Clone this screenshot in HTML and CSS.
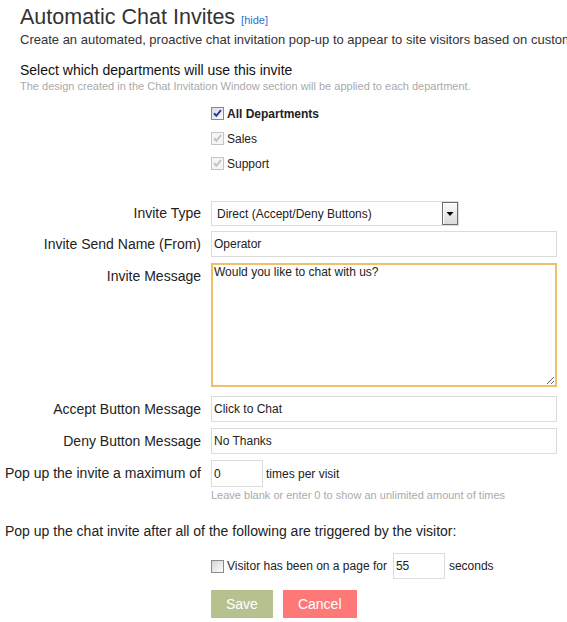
FILE: index.html
```html
<!DOCTYPE html>
<html lang="en">
<head>
<meta charset="utf-8">
<title>Automatic Chat Invites</title>
<link rel="stylesheet" href="styles.css">
</head>
<body>
<div class="head">
  <h1 class="title">Automatic Chat Invites <a class="hide" href="#">[hide]</a></h1>
  <p class="desc">Create an automated, proactive chat invitation pop-up to appear to site visitors based on custom rules.</p>
  <h2 class="section-title">Select which departments will use this invite</h2>
  <p class="note">The design created in the Chat Invitation Window section will be applied to each department.</p>
</div>

<div class="row depts">
  <span></span>
  <ul class="checks">
    <li class="check">
      <svg class="cb" viewBox="0 0 13 13"><defs><linearGradient id="g1" x1="0" y1="0" x2="1" y2="1"><stop offset="0" stop-color="#d9d9d9"/><stop offset="1" stop-color="#ffffff"/></linearGradient></defs><rect x="0.5" y="0.5" width="12" height="12" fill="url(#g1)" stroke="#8a8a8a"/><path d="M3 6.3 L5.3 8.8 L10 3.2" fill="none" stroke="#26409a" stroke-width="2"/></svg>
      <b>All Departments</b>
    </li>
    <li class="check">
      <svg class="cb" viewBox="0 0 13 13"><rect x="0.5" y="0.5" width="12" height="12" fill="#f5f5f5" stroke="#c4c4c4"/><path d="M3 6.3 L5.3 8.8 L10 3.2" fill="none" stroke="#c3c3c3" stroke-width="2"/></svg>
      <span>Sales</span>
    </li>
    <li class="check">
      <svg class="cb" viewBox="0 0 13 13"><rect x="0.5" y="0.5" width="12" height="12" fill="#f5f5f5" stroke="#c4c4c4"/><path d="M3 6.3 L5.3 8.8 L10 3.2" fill="none" stroke="#c3c3c3" stroke-width="2"/></svg>
      <span>Support</span>
    </li>
  </ul>
</div>

<form class="form">
  <div class="row r-type">
    <label class="lbl lbl-type">Invite Type</label>
    <div class="select-wrap">
      <select class="select"><option>Direct (Accept/Deny Buttons)</option></select>
      <span class="arrow"><svg width="14" height="21" viewBox="0 0 14 21"><path d="M3.5 9 H10.5 L7 13 Z" fill="#000"/></svg></span>
    </div>
  </div>
  <div class="row r-from">
    <label class="lbl">Invite Send Name (From)</label>
    <input class="input" type="text" value="Operator">
  </div>
  <div class="row r-msg">
    <label class="lbl">Invite Message</label>
    <textarea class="textarea">Would you like to chat with us?</textarea>
  </div>
  <div class="row r-accept">
    <label class="lbl">Accept Button Message</label>
    <input class="input" type="text" value="Click to Chat">
  </div>
  <div class="row r-deny">
    <label class="lbl">Deny Button Message</label>
    <input class="input" type="text" value="No Thanks">
  </div>
  <div class="row r-max">
    <label class="lbl lbl-max">Pop up the invite a maximum of</label>
    <div>
      <div class="inline">
        <input class="input small" type="text" value="0">
        <span class="after">times per visit</span>
      </div>
      <p class="hint">Leave blank or enter 0 to show an unlimited amount of times</p>
    </div>
  </div>

  <p class="trigger">Pop up the chat invite after all of the following are triggered by the visitor:</p>

  <div class="row r-visitor">
    <span></span>
    <div class="inline">
      <svg class="cb" viewBox="0 0 13 13"><defs><linearGradient id="g2" x1="0" y1="0" x2="1" y2="1"><stop offset="0" stop-color="#d4d4d4"/><stop offset="1" stop-color="#ffffff"/></linearGradient></defs><rect x="0.5" y="0.5" width="12" height="12" fill="url(#g2)" stroke="#8a8a8a"/></svg>
      <span class="vtext">Visitor has been on a page for</span>
      <input class="input small secs" type="text" value="55">
      <span class="after secs-label">seconds</span>
    </div>
  </div>

  <div class="row r-buttons">
    <span></span>
    <div class="buttons">
      <button type="button" class="btn save">Save</button>
      <button type="button" class="btn cancel">Cancel</button>
    </div>
  </div>
</form>
</body>
</html>
```

FILE: styles.css
```css
html, body {
  margin: 0;
  padding: 0;
  background: #ffffff;
  overflow: hidden;
}

body {
  font-family: "Liberation Sans", Arial, sans-serif;
  color: #222222;
}

.head {
  padding-left: 20px;
}

.title {
  margin: 0;
  padding-top: 4px;
  font-size: 21.5px;
  line-height: 26px;
  font-weight: normal;
  color: #333333;
  white-space: nowrap;
}

.hide {
  font-size: 11px;
  color: #2f6fd2;
  text-decoration: none;
}

.desc {
  margin: -1px 0 0;
  font-size: 13px;
  line-height: 16px;
  color: #333333;
  white-space: nowrap;
  overflow: hidden;
}

.section-title {
  margin: 14px 0 0;
  font-size: 14px;
  line-height: 17px;
  font-weight: normal;
  color: #111111;
}

.note {
  margin: 1px 0 0;
  font-size: 11px;
  line-height: 13px;
  color: #aaaaaa;
}

.row {
  display: grid;
  grid-template-columns: 201px 346px;
  column-gap: 10px;
}

.depts {
  margin-top: 8px;
}

.checks {
  list-style: none;
  margin: 0;
  padding: 0;
}

.check {
  display: flex;
  align-items: center;
  height: 25px;
  font-size: 12px;
  color: #222222;
}

.cb {
  width: 13px;
  height: 13px;
  flex: none;
  display: block;
  margin-right: 3px;
}

.form {
  margin: 25px 0 0;
}

.lbl {
  text-align: right;
  font-size: 14px;
  line-height: 26px;
  white-space: nowrap;
  color: #222222;
}

.lbl-type {
  line-height: 25px;
}

.lbl-max {
  line-height: 27px;
}

.r-type { margin-bottom: 5px; }
.r-from { margin-bottom: 6px; }
.r-msg { margin-bottom: 9px; }
.r-accept { margin-bottom: 6px; }
.r-deny { margin-bottom: 6px; }

.select-wrap {
  position: relative;
  width: 248px;
  height: 25px;
}

.select {
  -webkit-appearance: none;
  appearance: none;
  box-sizing: border-box;
  display: block;
  width: 248px;
  height: 25px;
  margin: 0;
  border: 1px solid #dcdcdc;
  border-radius: 0;
  background: #ffffff;
  padding: 0 20px 0 5px;
  font-family: "Liberation Sans", Arial, sans-serif;
  font-size: 12px;
  color: #222222;
  outline: none;
}

.arrow {
  position: absolute;
  top: 1px;
  right: 1px;
  width: 16px;
  height: 23px;
  box-sizing: border-box;
  border: 1px solid #6e6e6e;
  background: linear-gradient(#fbfbfb, #dadada);
  box-shadow: inset 1px 1px 0 #ffffff;
  pointer-events: none;
}

.arrow svg {
  display: block;
}

.input {
  box-sizing: border-box;
  display: block;
  width: 346px;
  height: 26px;
  margin: 0;
  border: 1px solid #dcdcdc;
  border-radius: 0;
  padding: 0 2px;
  background: #ffffff;
  font-family: "Liberation Sans", Arial, sans-serif;
  font-size: 12px;
  color: #222222;
  outline: none;
}

.textarea {
  box-sizing: border-box;
  display: block;
  width: 346px;
  height: 124px;
  margin: 0;
  border: 2px solid #efc06a;
  border-radius: 0;
  padding: 0 1px;
  font-family: "Liberation Sans", Arial, sans-serif;
  font-size: 12px;
  line-height: 14px;
  color: #222222;
  outline: none;
}

.inline {
  display: flex;
  align-items: center;
}

.small {
  width: 52px;
  height: 27px;
}

.after {
  margin-left: 3px;
  font-size: 12px;
  color: #222222;
}

.hint {
  margin: 2px 0 0;
  font-size: 11px;
  line-height: 13px;
  color: #aaaaaa;
  white-space: nowrap;
}

.trigger {
  margin: 21px 0 0;
  padding-left: 5px;
  font-size: 14px;
  line-height: 17px;
  color: #222222;
  white-space: nowrap;
}

.r-visitor {
  margin-top: 13px;
}

.vtext {
  font-size: 12px;
  color: #222222;
  white-space: nowrap;
}

.secs {
  height: 26px;
  margin-left: 6px;
}

.secs-label {
  margin-left: 4px;
}

.r-buttons {
  margin-top: 11px;
}

.buttons {
  display: flex;
  gap: 10px;
}

.btn {
  height: 28px;
  margin: 0;
  padding: 0 15px;
  border: 0;
  border-radius: 0;
  font-family: "Liberation Sans", Arial, sans-serif;
  font-size: 14px;
  color: #ffffff;
}

.save {
  background: #b6c190;
}

.cancel {
  background: #fe7878;
}
```
